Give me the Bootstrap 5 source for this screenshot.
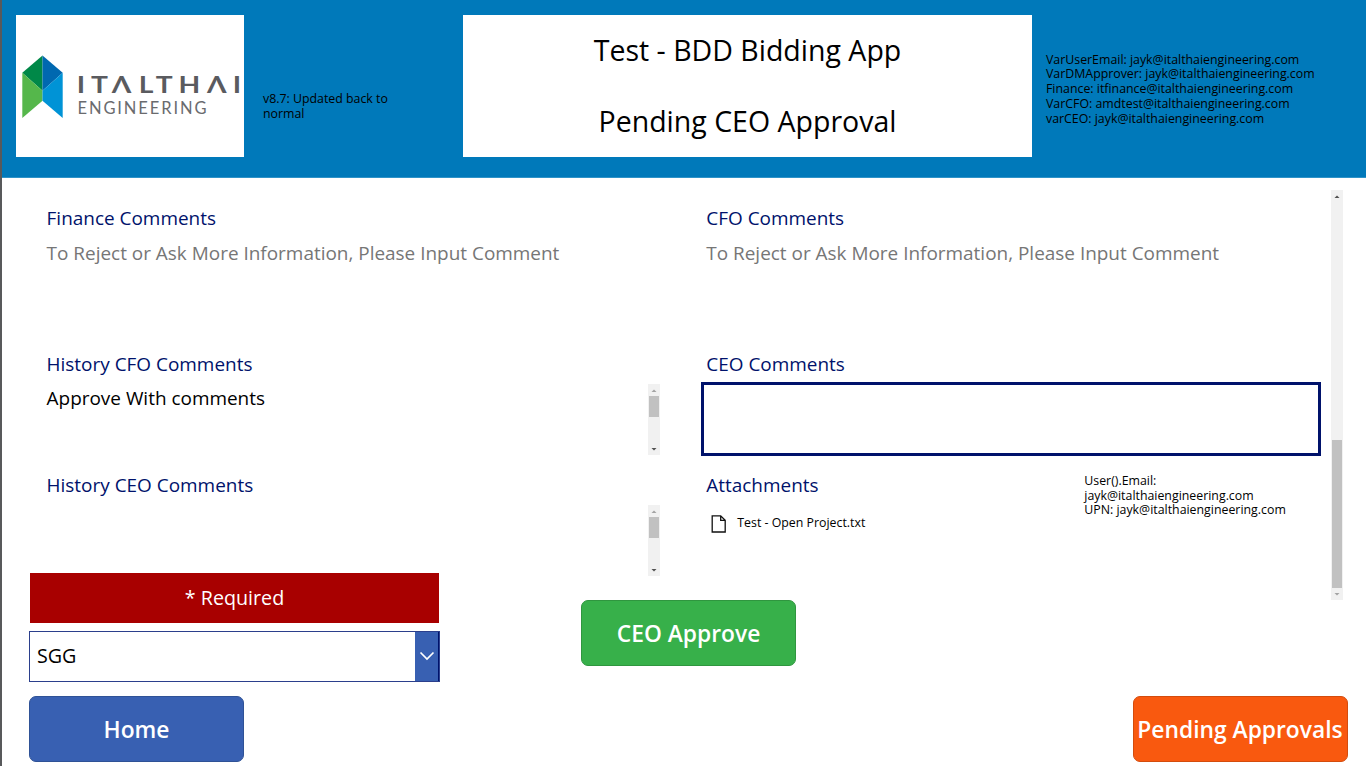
<!DOCTYPE html>
<html lang="en">
<head>
<meta charset="utf-8">
<title>BDD Bidding App</title>
<link rel="stylesheet" href="https://cdn.jsdelivr.net/npm/bootstrap@5.3.0/dist/css/bootstrap.min.css">
<script src="https://cdn.jsdelivr.net/npm/bootstrap@5.3.0/dist/js/bootstrap.bundle.min.js"></script>
<style>
  body { font-family: "Open Sans", sans-serif; color: #000; background: #fff; }
  .app { width: 1366px; height: 766px; border-left: 2px solid #58595b; }
  .app-header { height: 178px; background: #0079ba; padding: 14.5px 0 0 14px; border-bottom: 1px solid #2f93c8; }
  .logo-box { width: 228px; height: 142px; }
  .title-box { width: 569px; height: 142px; margin-left: 55px; font-size: 28.5px; }
  .title-box > div { height: 71px; line-height: 71px; }
  .title-box > div:first-child { padding-top: .5px; }
  .tiny { font-size: 12.35px; line-height: 14.7px; }
  .version { width: 145px; margin: 77.5px 0 0 19px; }
  .vars { margin: 38.2px 0 0 14px; }
  .gallery { height: 410px; margin: 12px 23px 0 0; }
  .half { padding-top: 13px; }
  .half-left { width: 657.5px; flex: none; padding-left: 44.6px; }
  .half-right { width: 662px; flex: none; padding-left: 46.8px; }
  .field-label { height: 30px; line-height: 30px; font-size: 18.95px; color: #00126b; }
  .field-area { font-size: 18.95px; line-height: 30px; padding-top: 5px; }
  .area-lg { height: 116px; }
  .area-sm { height: 91px; padding-top: 4px; }
  .hint { color: #767676; }
  .ceo-input { width: 620px; height: 74px; margin: 3px 0 0 -5.3px; border: 3px solid #00126b; border-radius: 0; }
  .attach { margin-top: 14px; }
  .attach-list { width: 378px; }
  .attach-file { padding: 14.5px 0 0 5px; }
  .user-info { padding-top: 4px; }
  .sbar { width: 12px; background: #f1f1f1; }
  .sbar-mini { width: 11.5px; height: 70.5px; margin-top: 1px; }
  .sbar svg { display: block; }
  .thumb { width: 10px; background: #c1c1c1; margin: 0 auto; }
  .lower { margin-top: -27.5px; padding: 0 18.5px 0 27px; height: 189.5px; }
  .lower-left { width: 411px; }
  .required { height: 50px; line-height: 49.5px; margin: 0 1px; background: #a80000; font-size: 19.7px; }
  .picker { height: 51px; margin-top: 8px; border: 1.5px solid #2b3f8c; font-size: 19.7px; padding-left: 7px; }
  .picker-btn { width: 24px; background: #3860b2; border-right: 1px solid #00126b; }
  .app-btn { width: 215px; height: 66px; border-radius: 7px; font-size: 22.8px; font-weight: 600; color: #fff; padding: 0; line-height: 65px; white-space: nowrap; }
  .btn-home { background: #3860b2; border-color: #2f5296; margin-top: 14px; }
  .btn-approve { background: #37b04a; border-color: #2f963f; margin: 27.5px 0 0 141px; }
  .btn-pending { background: #f9590f; border-color: #d44c0d; }
</style>
</head>
<body>
<div class="app overflow-hidden">
  <header class="app-header d-flex align-items-start">
    <div class="logo-box bg-white">
      <svg width="228" height="142" viewBox="16 14.5 228 142" role="img" aria-label="Italthai Engineering">
        <path d="M42.5 55 22.3 72.3 42.5 90.3z" fill="#008848"/>
        <path d="M42.5 55 62.7 72.3 42.5 90.3z" fill="#0068b0"/>
        <path d="M22.3 72.3 42.5 90.3V100.3L22.3 117.5z" fill="#55b74b"/>
        <path d="M62.7 72.3 42.5 90.3V100.3L62.7 117.5z" fill="#0093d6"/>
        <g transform="scale(1.2 1)" font-family="Lato" font-weight="700" font-size="23.5" fill="#5a5b5f">
          <text y="92.3" text-anchor="middle"><tspan x="67.4">I</tspan><tspan x="82.9">T</tspan><tspan x="101.2">Λ</tspan><tspan x="121.7">L</tspan><tspan x="136.9">T</tspan><tspan x="157.9">H</tspan><tspan x="180.6">Λ</tspan><tspan x="197.4">I</tspan></text>
        </g>
        <text x="77.5" y="113.5" font-family="Lato" font-size="16.5" fill="#6a6b6e" textLength="129">ENGINEERING</text>
      </svg>
    </div>
    <div class="version tiny">v8.7: Updated back to normal</div>
    <div class="title-box bg-white text-center">
      <div>Test - BDD Bidding App</div>
      <div>Pending CEO Approval</div>
    </div>
    <div class="vars tiny text-nowrap">
      VarUserEmail: jayk@italthaiengineering.com<br>
      VarDMApprover: jayk@italthaiengineering.com<br>
      Finance: itfinance@italthaiengineering.com<br>
      VarCFO: amdtest@italthaiengineering.com<br>
      varCEO: jayk@italthaiengineering.com
    </div>
  </header>

  <main>
    <section class="gallery d-flex">
      <div class="half half-left">
        <div class="field-label">Finance Comments</div>
        <div class="field-area area-lg hint"><span>To Reject or Ask More Information, Please Input Comment</span></div>
        <div class="field-label">History CFO Comments</div>
        <div class="field-area area-sm d-flex justify-content-between">
          <span>Approve With comments</span>
          <div class="sbar sbar-mini d-flex flex-column">
            <svg width="12" height="12"><path d="M3.5 8h5L6 5.5z" fill="#a3a3a3"/></svg>
            <div class="thumb" style="height:21px"></div>
            <svg class="mt-auto" width="12" height="12"><path d="M3.5 5h5L6 7.5z" fill="#505050"/></svg>
          </div>
        </div>
        <div class="field-label">History CEO Comments</div>
        <div class="field-area area-sm d-flex justify-content-end">
          <div class="sbar sbar-mini d-flex flex-column">
            <svg width="12" height="12"><path d="M3.5 8h5L6 5.5z" fill="#a3a3a3"/></svg>
            <div class="thumb" style="height:21px"></div>
            <svg class="mt-auto" width="12" height="12"><path d="M3.5 5h5L6 7.5z" fill="#505050"/></svg>
          </div>
        </div>
      </div>
      <div class="half half-right">
        <div class="field-label">CFO Comments</div>
        <div class="field-area area-lg hint"><span>To Reject or Ask More Information, Please Input Comment</span></div>
        <div class="field-label">CEO Comments</div>
        <div class="ceo-input"></div>
        <div class="d-flex attach">
          <div class="attach-list">
            <div class="field-label">Attachments</div>
            <div class="tiny attach-file d-flex align-items-center">
              <svg width="16" height="18" viewBox="0 0 16 18" fill="none" stroke="#111" stroke-width="1.3"><path d="M1.2.8h8.5l4.500 4.500v11.700H1.200zM9.700.8v4.500h4.500"/></svg>
              <span style="margin-left:10px">Test - Open Project.txt</span>
            </div>
          </div>
          <div class="tiny text-nowrap user-info">User().Email:<br>jayk@italthaiengineering.com<br>UPN: jayk@italthaiengineering.com</div>
        </div>
      </div>
      <div class="sbar ms-auto d-flex flex-column">
        <svg width="12" height="12"><path d="M3.5 8h5L6 5.5z" fill="#505050"/></svg>
        <div class="thumb mt-auto" style="height:148px"></div>
        <svg width="12" height="12"><path d="M3.5 5h5L6 7.5z" fill="#a3a3a3"/></svg>
      </div>
    </section>

    <section class="lower d-flex align-items-start position-relative">
      <div class="lower-left">
        <div class="required text-center text-white">* Required</div>
        <div class="picker d-flex justify-content-between">
          <span class="align-self-center">SGG</span>
          <div class="picker-btn d-flex align-items-center justify-content-center">
            <svg width="16" height="10" viewBox="0 0 16 10" fill="none" stroke="#fff" stroke-width="1.7"><path d="M1.5 1.5 8 8l6.5-6.5"/></svg>
          </div>
        </div>
        <button class="btn app-btn btn-home" type="button">Home</button>
      </div>
      <button class="btn app-btn btn-approve" type="button">CEO Approve</button>
      <button class="btn app-btn btn-pending ms-auto align-self-end" type="button">Pending Approvals</button>
    </section>
  </main>
</div>
</body>
</html>
